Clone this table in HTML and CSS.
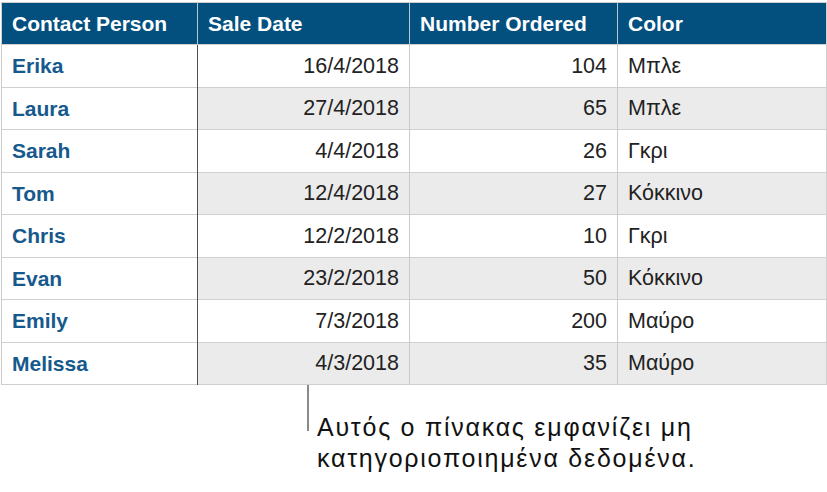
FILE: index.html
```html
<!DOCTYPE html>
<html>
<head>
<meta charset="utf-8">
<link rel="stylesheet" href="styles.css">
</head>
<body>
<div class="page">
  <table class="data">
    <colgroup>
      <col class="c1"><col class="c2"><col class="c3"><col class="c4">
    </colgroup>
    <thead>
      <tr><th class="first">Contact Person</th><th>Sale Date</th><th>Number Ordered</th><th>Color</th></tr>
    </thead>
    <tbody>
      <tr><td class="name">Erika</td><td class="num">16/4/2018</td><td class="num">104</td><td>Μπλε</td></tr>
      <tr class="alt"><td class="name">Laura</td><td class="num">27/4/2018</td><td class="num">65</td><td>Μπλε</td></tr>
      <tr><td class="name">Sarah</td><td class="num">4/4/2018</td><td class="num">26</td><td>Γκρι</td></tr>
      <tr class="alt"><td class="name">Tom</td><td class="num">12/4/2018</td><td class="num">27</td><td>Κόκκινο</td></tr>
      <tr><td class="name">Chris</td><td class="num">12/2/2018</td><td class="num">10</td><td>Γκρι</td></tr>
      <tr class="alt"><td class="name">Evan</td><td class="num">23/2/2018</td><td class="num">50</td><td>Κόκκινο</td></tr>
      <tr><td class="name">Emily</td><td class="num">7/3/2018</td><td class="num">200</td><td>Μαύρο</td></tr>
      <tr class="alt"><td class="name">Melissa</td><td class="num">4/3/2018</td><td class="num">35</td><td>Μαύρο</td></tr>
    </tbody>
  </table>
  <div class="callout">
    <div class="leader"></div>
    <p class="note">Αυτός ο πίνακας εμφανίζει μη<br>κατηγοριοποιημένα δεδομένα.</p>
  </div>
</div>
</body>
</html>
```
FILE: styles.css
```css
html, body {
  margin: 0;
  padding: 0;
  background: #ffffff;
}
.page {
  padding: 2px 0 0 1px;
  font-family: "Liberation Sans", Arial, "Noto Sans", sans-serif;
}
.data {
  border-collapse: collapse;
  table-layout: fixed;
  width: 825px;
  border: 1px solid #cfcfcf;
}
.c1 { width: 196px; }
.c2 { width: 212px; }
.c3 { width: 208px; }
.c4 { width: 209px; }
.data th {
  background: #03507f;
  color: #ffffff;
  font-weight: bold;
  font-size: 21px;
  text-align: left;
  height: 42px;
  padding: 0 10px;
  border-left: 1px solid #b9c6d2;
  box-sizing: border-box;
  vertical-align: middle;
  white-space: nowrap;
}
.data th.first { border-left: none; }
.data td {
  height: 42.5px;
  padding: 1px 10px 0;
  font-size: 21.5px;
  color: #222222;
  border-top: 1px solid #d0d0d0;
  border-left: 1px solid #cacaca;
  box-sizing: border-box;
  vertical-align: middle;
  white-space: nowrap;
}
.data td.name {
  color: #16598d;
  font-weight: bold;
  font-size: 21px;
  border-right: 1px solid #505050;
}
.data td.num { text-align: right; }
.data tr.alt td:not(.name) { background: #ebebeb; }
.callout {
  display: flex;
  align-items: flex-start;
  margin-left: 306px;
}
.leader {
  width: 2px;
  height: 46px;
  background: #8a8a8a;
  flex: none;
}
.note {
  margin: 27px 0 0 8px;
  font-size: 25px;
  letter-spacing: 1.75px;
  line-height: 31px;
  color: #111111;
  white-space: nowrap;
}
```
